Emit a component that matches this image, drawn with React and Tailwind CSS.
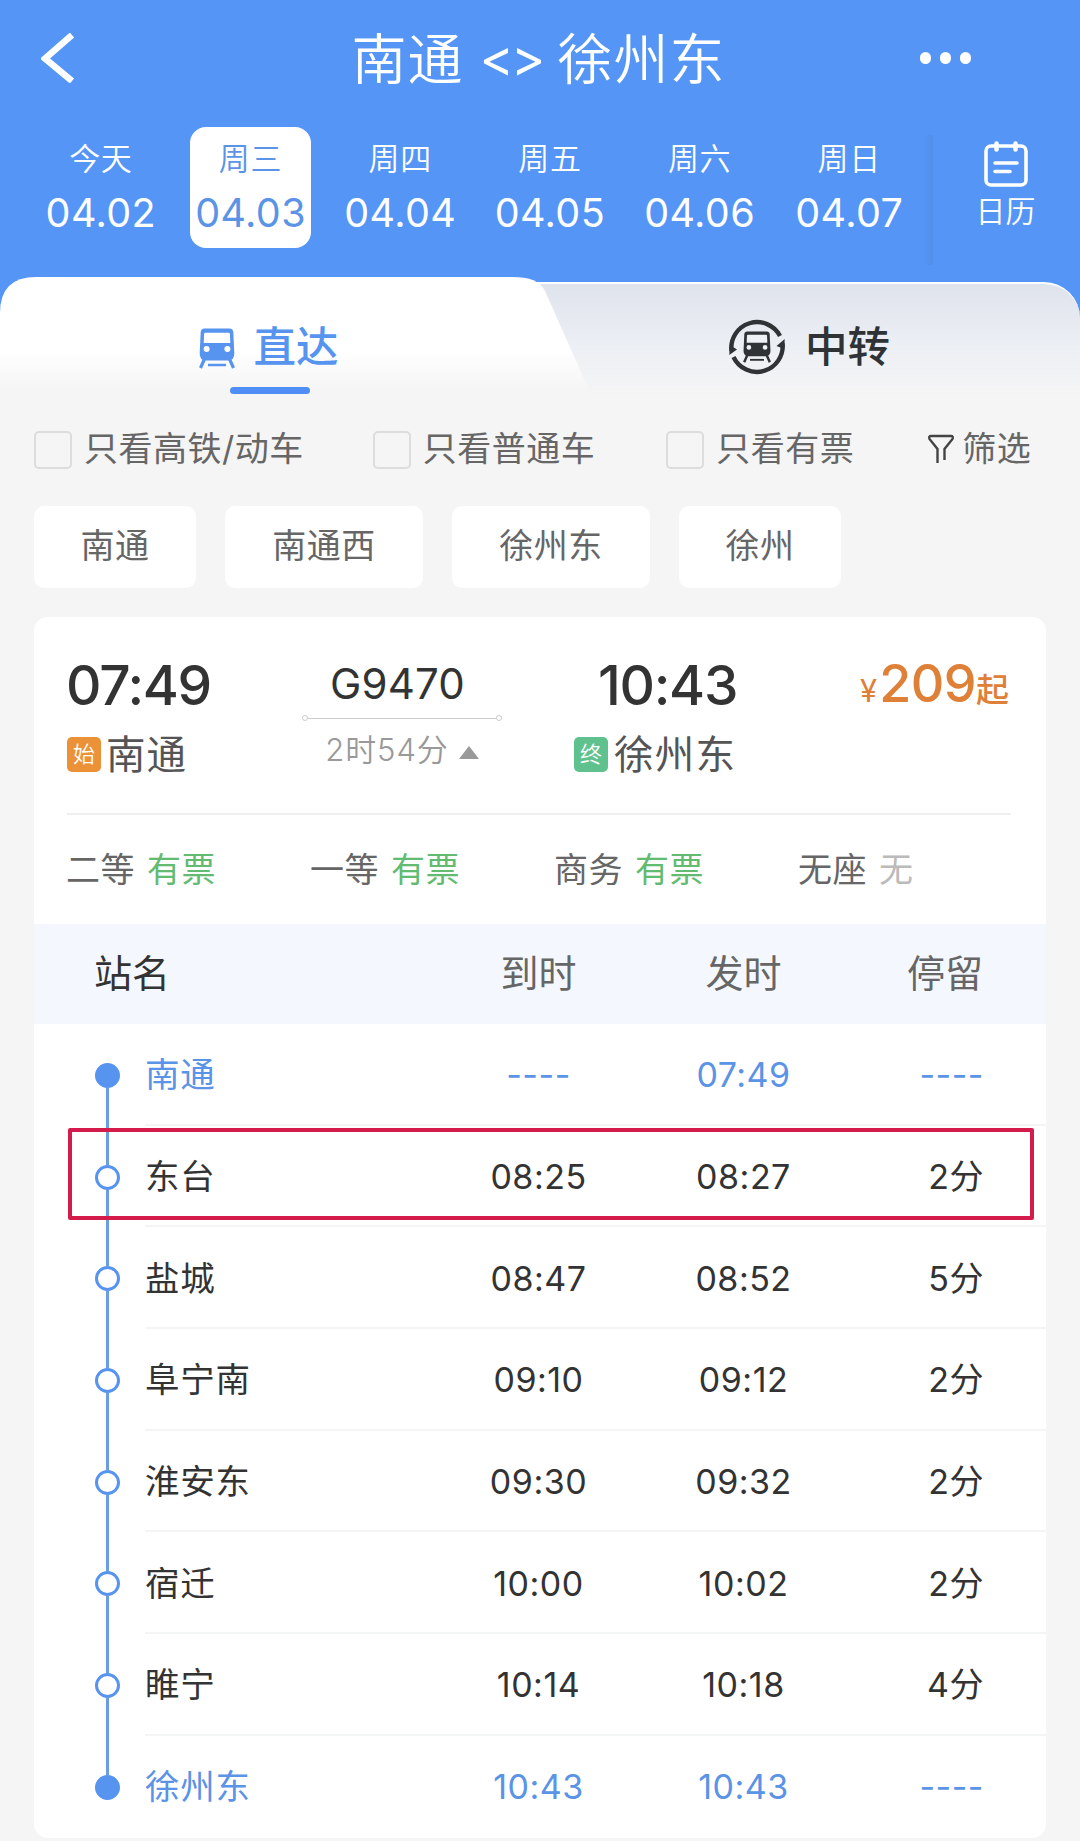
const DAYS = [
  { week: '今天', date: '04.02' },
  { week: '周三', date: '04.03', active: true },
  { week: '周四', date: '04.04' },
  { week: '周五', date: '04.05' },
  { week: '周六', date: '04.06' },
  { week: '周日', date: '04.07' },
]

const STATIONS = [
  { label: '南通', size: 'w-[162px]' },
  { label: '南通西', size: 'w-[198px]' },
  { label: '徐州东', size: 'w-[198px]' },
  { label: '徐州', size: 'w-[162px]' },
]

const SEATS = [
  { name: '二等', status: '有票' },
  { name: '一等', status: '有票' },
  { name: '商务', status: '有票' },
  { name: '无座', status: '无', soldOut: true },
]

const STOPS = [
  { name: '南通', arrive: '----', depart: '07:49', stay: '----', end: true },
  { name: '东台', arrive: '08:25', depart: '08:27', stay: '2分', marked: true },
  { name: '盐城', arrive: '08:47', depart: '08:52', stay: '5分' },
  { name: '阜宁南', arrive: '09:10', depart: '09:12', stay: '2分' },
  { name: '淮安东', arrive: '09:30', depart: '09:32', stay: '2分' },
  { name: '宿迁', arrive: '10:00', depart: '10:02', stay: '2分' },
  { name: '睢宁', arrive: '10:14', depart: '10:18', stay: '4分' },
  { name: '徐州东', arrive: '10:43', depart: '10:43', stay: '----', end: true },
]

function TrainIcon({ className, hole = 'white' }) {
  return (
    <svg viewBox="0 0 36 41" className={className}>
      <path d="M5.500 0.500H30.500Q34 0.500 34.300 4L35.300 25Q35.500 32.500 29 32.500H7Q0.500 32.500 0.700 25L1.700 4Q2 0.500 5.500 0.500z" fill="currentColor" />
      <path d="M6.500 4.800H29.500Q30.800 4.800 30.900 6L31.300 15H4.700L5.100 6Q5.200 4.800 6.500 4.800z" fill={hole} />
      <circle cx="7.600" cy="21" r="3" fill={hole} />
      <circle cx="28.400" cy="21" r="3" fill={hole} />
      <path d="M5.500 31L1.500 40M30.500 31L34.500 40" stroke="currentColor" strokeWidth="3.200" fill="none" />
      <path d="M9 37h18" stroke="currentColor" strokeWidth="2.400" />
    </svg>
  )
}

function TransferIcon() {
  return (
    <div className="relative w-[58px] h-[58px] flex items-center justify-center text-[#2f3336]">
      <svg viewBox="0 0 58 58" className="absolute inset-0 overflow-visible" fill="none">
        <path d="M3.500 33A25.800 25.800 0 0 1 52 18" stroke="currentColor" strokeWidth="4.400" />
        <path d="M54.500 25A25.800 25.800 0 0 1 5.500 39" stroke="currentColor" strokeWidth="4.400" />
        <path d="M1.300 37L1.800 27L9 31.500z" fill="currentColor" />
        <path d="M56.700 21L56.200 31L48.500 28z" fill="currentColor" />
      </svg>
      <TrainIcon className="w-[28px] h-[32px]" hole="#edf0f4" />
    </div>
  )
}

function Header() {
  return (
    <header className="h-[277px] flex flex-col text-white">
      <div className="h-[115px] px-[41px] flex items-center justify-between">
        <svg viewBox="0 0 34 50" className="w-[34px] h-[50px]" fill="none">
          <path d="M31 2L4 25.500L31 48" stroke="white" strokeWidth="6.500" />
        </svg>
        <h1 className="flex items-center text-[55px] leading-[56px] font-[350] tracking-[1px] ml-[82px] mt-[2px]">
          南通
          <span className="text-[52px] font-normal tracking-[-3px] ml-[16px] mr-[15px] -mt-px">&lt;&gt;</span>
          徐州东
        </h1>
        <div className="flex gap-[9px] mr-[68px]">
          <span className="w-[11px] h-[12px] rounded-full bg-white" />
          <span className="w-[11px] h-[12px] rounded-full bg-white" />
          <span className="w-[11px] h-[12px] rounded-full bg-white" />
        </div>
      </div>

      <div className="flex pl-[26px] pt-[12px]">
        {DAYS.map((d) => (
          <div key={d.date} className="w-[149.700px] flex justify-center">
            <div
              className={`w-[121px] h-[121px] rounded-[16px] flex flex-col items-center pt-[16px] ${
                d.active ? 'bg-white text-[#5b93e6]' : ''
              }`}
            >
              <span className="text-[31px] leading-[32px] font-[350] tracking-[0.700px]">{d.week}</span>
              <span className="text-[39.500px] leading-[40px] tracking-[0.400px] mt-[18px]">{d.date}</span>
            </div>
          </div>
        ))}
        <div className="w-[10px] h-[130px] -ml-px mt-[8px] bg-linear-to-r from-[#5595f6] to-[#528fea]" />
        <div className="flex-1 flex flex-col items-center pt-[14px] pl-[4px] pr-[6px]">
          <svg viewBox="0 0 44 46" className="w-[44px] h-[46px]" fill="none" stroke="white">
            <rect x="2" y="5" width="40" height="39" rx="5" strokeWidth="3.600" />
            <path d="M12.500 2.500v6M31.500 2.500v6" strokeWidth="4.500" strokeLinecap="round" />
            <path d="M11 22h22M11 30.500h15" strokeWidth="3.600" strokeLinecap="round" />
          </svg>
          <span className="text-[30px] leading-[30px] font-[350] mt-[9px]">日历</span>
        </div>
      </div>
    </header>
  )
}

function Tabs() {
  return (
    <div className="flex h-[120px]">
      <div className="relative z-10 w-[592px] h-[120px] pr-[52px] flex flex-col items-center bg-linear-to-b from-white from-60% to-[#f5f5f5] to-95% [clip-path:path('M0_120V36Q0_0_36_0H512C530_0_540_4_545_14L592_120Z')]">
        <div className="flex items-center mt-[48px] text-[#5694f0]">
          <TrainIcon className="w-[36px] h-[41px] mt-[2px] -ml-[2px]" />
          <span className="text-[42.500px] leading-[44px] font-medium ml-[18px]">直达</span>
        </div>
        <div className="w-[80px] h-[7px] rounded-full bg-[#4f8ff5] mt-[18px]" />
      </div>
      <div className="flex-1 -ml-[70px] mt-[5px] pl-[206px] flex items-start rounded-tr-[36px] border-t-[2px] border-white bg-linear-to-b from-[#dfe3ec] via-[#eceff4] via-55% to-[#f5f5f5]">
        <div className="flex items-center mt-[34px]">
          <TransferIcon />
          <span className="text-[42.500px] leading-[44px] font-medium text-[#2f3336] ml-[19px]">中转</span>
        </div>
      </div>
    </div>
  )
}

function CheckItem({ label }) {
  return (
    <label className="flex items-center">
      <span className="w-[38px] h-[38px] rounded-[5px] border-2 border-[#dcdcdc] mt-[2px]" />
      <span className="ml-[12px]">{label}</span>
    </label>
  )
}

function Filters() {
  return (
    <div className="h-[109px] pt-[32px] pl-[34px] flex items-start text-[34px] leading-[36px] tracking-[0.500px] text-[#666]">
      <CheckItem label="只看高铁/动车" />
      <div className="ml-[69px]">
        <CheckItem label="只看普通车" />
      </div>
      <div className="ml-[71px]">
        <CheckItem label="只看有票" />
      </div>
      <div className="ml-[74px] mt-[2px] flex items-center">
        <svg viewBox="0 0 26 31" className="w-[26px] h-[31px]" fill="none" stroke="#444" strokeWidth="2.400">
          <path d="M9.500 29V15L1.500 5Q0.500 2 3 2H23Q25.500 2 24.500 5L16.500 15V26" />
        </svg>
        <span className="ml-[8px]">筛选</span>
      </div>
    </div>
  )
}

function Badge({ color, children }) {
  return (
    <span className={`w-[34px] h-[35px] rounded-[5px] flex items-center justify-center text-white text-[22px] leading-none font-[350] ${color}`}>
      {children}
    </span>
  )
}

function TrainSummary() {
  return (
    <div className="h-[198px] ml-[33px] mr-[35px] pt-[44px] flex border-b-2 border-[#efefef]">
      <div className="w-[235px]">
        <div className="text-[55px] leading-[48px] font-[480] text-[#333] tracking-[-1.300px] -ml-px">07:49</div>
        <div className="flex items-center mt-[24px]">
          <Badge color="bg-[#eb9239]">始</Badge>
          <span className="text-[39.500px] leading-[40px] text-[#555] ml-[5px] mt-[2px] tracking-[1px]">南通</span>
        </div>
      </div>
      <div className="w-[200px] flex flex-col items-center">
        <div className="text-[42px] leading-[46px] text-[#333] tracking-[0.200px] mr-[9px]">G9470</div>
        <div className="w-full flex items-center mt-[8px]">
          <span className="w-[6px] h-[6px] rounded-full border border-[#ccc]" />
          <span className="flex-1 h-px bg-[#ccc]" />
          <span className="w-[6px] h-[6px] rounded-full border border-[#ccc]" />
        </div>
        <div className="flex items-center mt-[11px] text-[31px] leading-[36px] font-[350] text-[#999] tracking-[0.900px]">
          2时54分
          <svg viewBox="0 0 20 13" className="w-[20px] h-[13px] ml-[10px] mt-[4px]">
            <path d="M10 0L20 13H0z" fill="#999" />
          </svg>
        </div>
      </div>
      <div className="w-[270px] pl-[72px]">
        <div className="text-[55px] leading-[48px] font-[480] text-[#333] tracking-[-1.300px] pl-[24px]">10:43</div>
        <div className="flex items-center mt-[24px] whitespace-nowrap">
          <Badge color="bg-[#5fc28e]">终</Badge>
          <span className="text-[39.500px] leading-[40px] text-[#555] ml-[6px] mt-[2px] tracking-[1.300px]">徐州东</span>
        </div>
      </div>
      <div className="flex-1 flex items-baseline justify-end text-[#df8038] h-[48px] mr-[2px]">
        <span className="text-[31px] leading-[46px]">¥</span>
        <span className="text-[52px] leading-[46px] font-[480] ml-[2px] tracking-[-0.500px]">209</span>
        <span className="text-[33px] leading-[46px] font-medium">起</span>
      </div>
    </div>
  )
}

function SeatRow() {
  return (
    <div className="h-[109px] pl-[32px] flex items-center text-[34px] leading-[36px]">
      {SEATS.map((s) => (
        <div key={s.name} className="w-[244px] flex tracking-[0.500px]">
          <span className="text-[#666]">{s.name}</span>
          <span className={`ml-[12px] ${s.soldOut ? 'text-[#bbb]' : 'text-[#62bb70]'}`}>{s.status}</span>
        </div>
      ))}
    </div>
  )
}

function StopRow({ stop, first, last }) {
  return (
    <div className={`relative h-[101.700px] flex ${stop.end ? 'text-[#5b93e6]' : 'text-[#333]'}`}>
      <div className="w-[111px] pl-[60px]">
        <div className="w-[26px] h-full flex flex-col items-center">
          <span className={`w-[3px] h-[39px] ${first ? '' : 'bg-[#6a9fdf]'}`} />
          <span className={`w-[25px] h-[25px] rounded-full border-3 border-[#5694f0] shrink-0 ${stop.end ? 'bg-[#5694f0]' : 'bg-white'}`} />
          <span className={`w-[3px] flex-1 ${last ? '' : 'bg-[#6a9fdf]'}`} />
        </div>
      </div>
      <div className={`flex-1 flex items-center text-[34px] leading-[36px] ${last ? 'pt-[1px]' : 'pt-[3px] border-b-2 border-[#f3f4f5]'}`}>
        <span className="w-[291px] text-[34.500px] tracking-[0.700px]">{stop.name}</span>
        <span className="w-[205px] text-center tracking-[0.500px]">{stop.arrive}</span>
        <span className="w-[205px] text-center tracking-[0.500px]">{stop.depart}</span>
        <span className="flex-1 text-right pr-[62px] tracking-[0.500px]">{stop.stay}</span>
      </div>
      {stop.marked && (
        <div className="absolute left-[34px] right-[12px] top-[2px] h-[92px] border-4 border-[#d41b4b] rounded-[2px]" />
      )}
    </div>
  )
}

export default function App() {
  return (
    <div className="w-[1080px] h-[1841px] overflow-hidden bg-[#f5f5f5] font-['Inter','Noto_Sans_CJK_SC',sans-serif]">
      <div className="bg-[linear-gradient(#5595f6_340px,#f5f5f5_340px)]">
        <Header />
        <Tabs />
      </div>
      <Filters />

      <div className="pl-[34px] flex gap-[29px]">
        {STATIONS.map((s) => (
          <div
            key={s.label}
            className={`h-[82px] rounded-[10px] bg-white flex items-center justify-center pb-[2px] text-[34px] leading-[36px] tracking-[0.500px] text-[#666] ${s.size}`}
          >
            {s.label}
          </div>
        ))}
      </div>

      <div className="mx-[34px] mt-[29px] rounded-[14px] bg-white overflow-hidden">
        <TrainSummary />
        <SeatRow />
        <div className="h-[100px] pl-[60px] pb-[3px] bg-[#f4f8fe] flex items-center text-[38px] leading-[40px] text-[#666]">
          <span className="w-[342px] text-[#333]">站名</span>
          <span className="w-[205px] text-center">到时</span>
          <span className="w-[205px] text-center">发时</span>
          <span className="flex-1 text-right pr-[63px]">停留</span>
        </div>
        {STOPS.map((stop, i) => (
          <StopRow key={stop.name} stop={stop} first={i === 0} last={i === STOPS.length - 1} />
        ))}
      </div>
    </div>
  )
}
